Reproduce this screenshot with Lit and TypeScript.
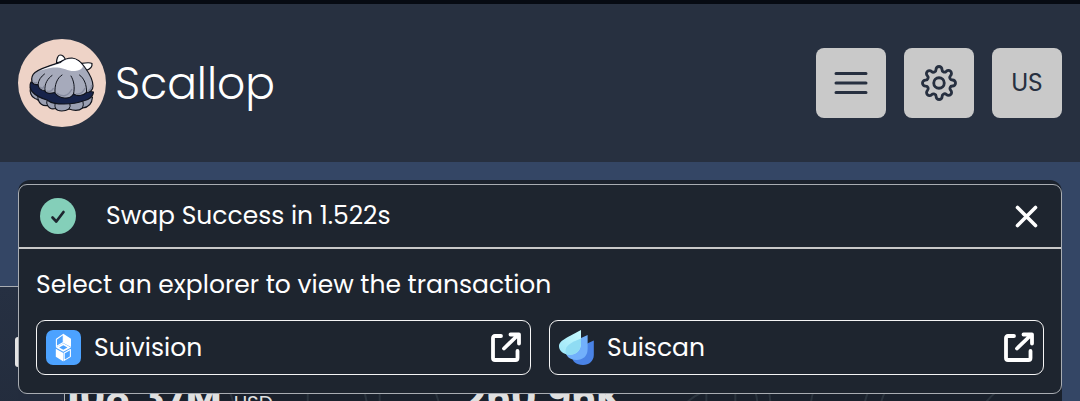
import { LitElement, html, css, svg } from "lit";
import { customElement, property, state } from "lit/decorators.js";

const suivisionLogo = svg`
  <svg class="brand" viewBox="0 0 35 35" aria-hidden="true">
    <rect width="35" height="35" rx="7" fill="#4ca2ff" />
    <path d="M10.4 9.2 17.3 4.4V12.4L10.4 16.4Z" fill="none" stroke="#fff" stroke-width="1.1" stroke-linejoin="round" />
    <path d="M17.3 3.8 25 8.8V17L17.3 13Z" fill="#fff" />
    <path d="M17.3 13.2 25 17.5 17.3 21.8 9.8 17.5Z" fill="#fff" />
    <path d="M17.3 15.2 21.4 17.5 17.3 19.8 13.2 17.5Z" fill="#4ca2ff" />
    <path d="M9.8 18.8 17.4 23V31.4L9.8 26.8Z" fill="#fff" />
    <path d="M18.2 23 24.4 19.6V26.6L18.2 30.4Z" fill="none" stroke="#fff" stroke-width="1.1" stroke-linejoin="round" />
  </svg>`;

const suiscanLogo = svg`
  <svg class="brand" viewBox="0 0 35 35" aria-hidden="true">
    <defs>
      <linearGradient id="ice" x1="0" y1="1" x2="1" y2="0">
        <stop offset="0" stop-color="#9be6f8" /><stop offset="1" stop-color="#c8faff" />
      </linearGradient>
    </defs>
    <path d="M34.8 10.5V25C34.8 31 30 35 24 35 17 35 13 31 13 26.500 13 21 19 18 34.8 10.500Z" fill="#4a83e6" />
    <path d="M28.600 5V19C28.600 26 24 30 17.500 30 11 30 6.500 26 6.500 21 6.500 15 13 12 28.600 5Z" fill="#72b0fb" />
    <path d="M22 0V13C22 20.500 17 24.800 11 24.800 4.500 24.800 0 20.500 0 16.500 0 11 6 8.500 22 0Z" fill="url(#ice)" />
    <path d="M22 8.500V13C22 20.500 17 24.800 11 24.800 9.600 24.800 8.300 24.600 7.200 24.200 6.700 23.200 6.500 22.100 6.500 21 6.500 15.500 12 12.400 22 8.500Z" fill="#8fdcf3" />
  </svg>`;

@customElement("scallop-mark")
export class ScallopMark extends LitElement {
  static styles = css`
    :host { display: block; width: 88px; height: 88px; }
    svg { display: block; width: 100%; height: 100%; }
  `;

  render() {
    return html`
      <svg viewBox="0 0 88 88" role="img" aria-label="Scallop logo">
        <circle cx="44" cy="44" r="44" fill="#eed3c7" />
        <g stroke="#10131c" stroke-width="1.2" stroke-linejoin="round" stroke-linecap="round">
          <path d="M38.500 24C38.500 20 40 16 42 16 44.500 16 46.500 18 47.500 21Z" fill="#fff" />
          <path d="M62 24.500C66 24 72 23 74 24.500 74.500 28 71 30.500 68 31.500Z" fill="#fff" />
          <path d="M12.500 48C11.500 53 13 58 17 59.500 19 60 20 61 20.500 61.500 22 65.500 25 67 29.500 66.500 31 69 34 70.500 37.500 69.500 40 73 47 72.500 51 70 55 71.500 61 72 64.500 69 70 68.500 74 65 74.500 58Z" fill="#9a9fb2" />
          <path d="M13 43C11 46 12 51 15 53.500 19 58 24 59.500 29 61 34 65 40 65 46 65 54 65 60 64 65 62 70 61 75 59 75.500 53Z" fill="#17234a" />
          <path d="M20 57Q19.500 59 20.500 61.500M29 61.500Q28 64 29.500 66.500M37 65Q36.500 67 37.500 69.500M52 65Q53 67 51 70M65 62.500Q66 66 64.500 69" fill="none" stroke-width="1" />
          <path d="M14 43C13 39 14 36 17 33.500 23 29 34 26 42 23.500 46 20 50 19 54 19 59 19.500 64 24 67 28.500 71 34 75 42 75 47 75 51 72 53.500 68.500 53.500 65 57 59 57.500 55.500 55 53.500 58 50 59.500 46.500 59 41 58.500 38 55.500 36.500 53.500 32 55 28 54 26.500 51.500 23 51.500 20.500 49 20 45.500 17 46 15 45 14 43Z" fill="#a6aabb" />
        </g>
        <path d="M20 32.500C27 29 35 26.500 42.500 24.200 46 21 50 19.700 54 19.700 59 20 63 24 65 27.500 63 31.500 58 32.500 53.500 32 47 30.500 43 28 35 28.500 29 29 24 31 20 32.500Z" fill="#fff" />
        <path d="M20 45.500C20.500 41 23 37.500 26.500 35M27 51.500C26 45 30 39 34 36.500M37 53.500C36.500 46 39 39 44 36M55.500 55C57 48 56 42 53 37M68.500 53.500C69 46 66 39 61.500 36" fill="none" stroke="#10131c" stroke-width="1" stroke-linecap="round" />
        <path d="M15.500 43Q18 45 19 43M22 48Q25 51 26 47M28.500 52Q33 54 35.500 49M38.500 54Q48 61 54 50M58 55Q64 56 67 49M70 52Q74 50 73.500 46" fill="none" stroke="#868b9f" stroke-width="1.400" />
      </svg>
    `;
  }
}

@customElement("explorer-notice")
export class ExplorerNotice extends LitElement {
  @property() message = "";

  static styles = css`
    :host {
      display: block;
      box-sizing: border-box;
      border: 1px solid #a9adb3;
      border-radius: 9px;
      background: #1e252f;
      color: #fff;
      font-size: 25px;
      line-height: 36px;
    }
    .head {
      display: flex;
      align-items: center;
      height: 62px;
      padding: 0 21px;
      border-bottom: 2px solid #c9c9c9;
    }
    .tick { width: 36px; height: 36px; margin-right: 30px; }
    .message { flex: 1; }
    button {
      display: flex;
      padding: 0;
      border: 0;
      background: none;
      color: inherit;
      cursor: pointer;
    }
    .cross { width: 27px; height: 27px; }
    .body { padding: 18px 17px; }
    .prompt { margin: 0 0 17px; }
    .links {
      display: grid;
      grid-template-columns: 1fr 1fr;
      gap: 18px;
    }
    .link {
      display: flex;
      align-items: center;
      gap: 13px;
      box-sizing: border-box;
      height: 55px;
      padding: 0 9px;
      border: 1px solid #f5f5f5;
      border-radius: 9px;
      color: inherit;
      text-decoration: none;
    }
    .name { flex: 1; }
    .brand { width: 35px; height: 35px; }
    .out { width: 31px; height: 31px; }
  `;

  private close() {
    this.dispatchEvent(new CustomEvent("dismiss"));
  }

  private link(name: string, logo: unknown) {
    return html`
      <a class="link" href="#${name.toLowerCase()}">
        ${logo}
        <span class="name">${name}</span>
        <svg class="out" viewBox="0 0 31 31" fill="none" stroke="#fff" stroke-width="3.800" stroke-linejoin="round" stroke-linecap="round" aria-hidden="true">
          <path d="M11 4H5Q3 4 3 6V26Q3 28 5 28H25.500Q27.500 28 27.500 26V19" />
          <path d="M14 16.500 28 3M20.500 2.500H29V11.500" />
        </svg>
      </a>
    `;
  }

  render() {
    return html`
      <div class="head">
        <svg class="tick" viewBox="0 0 36 36" aria-hidden="true">
          <circle cx="18" cy="18" r="18" fill="#84cfb9" />
          <path d="M12.500 19.500 16.300 23.500 23.500 14" fill="none" stroke="#1e252f" stroke-width="2.700" stroke-linecap="round" stroke-linejoin="round" />
        </svg>
        <span class="message">${this.message}</span>
        <button aria-label="Close" @click=${this.close}>
          <svg class="cross" viewBox="0 0 27 27" fill="none" stroke="#fff" stroke-width="3.600" stroke-linecap="round">
            <path d="M4.500 4.500 22.500 22.500M22.500 4.500 4.500 22.500" />
          </svg>
        </button>
      </div>
      <div class="body">
        <p class="prompt">Select an explorer to view the transaction</p>
        <div class="links">
          ${this.link("Suivision", suivisionLogo)} ${this.link("Suiscan", suiscanLogo)}
        </div>
      </div>
    `;
  }
}

@customElement("app-root")
export class AppRoot extends LitElement {
  @state() private noticeOpen = true;

  static styles = css`
    :host {
      display: flex;
      flex-direction: column;
      box-sizing: border-box;
      height: 100vh;
      overflow: hidden;
      border-top: 4px solid #060a12;
      background: #344665;
      color: #fff;
      font-family: Poppins, Inter, sans-serif;
    }
    header {
      display: flex;
      flex: none;
      align-items: center;
      box-sizing: border-box;
      height: 158px;
      padding: 0 18px;
      background: #273040;
    }
    .home {
      display: flex;
      align-items: center;
      gap: 9px;
      margin-right: auto;
      color: inherit;
      font-size: 44px;
      font-weight: 300;
      text-decoration: none;
    }
    .tools { display: flex; gap: 18px; }
    .tools button {
      display: flex;
      align-items: center;
      justify-content: center;
      width: 70px;
      height: 70px;
      padding: 0;
      border: 0;
      border-radius: 8px;
      background: #c9c9c9;
      color: #273040;
      font: inherit;
      font-size: 25px;
      cursor: pointer;
    }
    .tools svg {
      width: 36px;
      height: 36px;
      fill: none;
      stroke: currentColor;
      stroke-linecap: round;
      stroke-linejoin: round;
    }
    main {
      position: relative;
      display: grid;
      grid-template-columns: 18px 1fr 18px;
      flex: 1;
      min-height: 0;
    }
    .rail {
      margin-top: 124px;
      border-top: 1px solid #a9adb3;
      background: linear-gradient(#263042, #222b3b);
    }
    .chip {
      height: 30px;
      margin: 50px 0 0 15px;
      border-radius: 6px 0 0 6px;
      background: #e4e4e4;
    }
    .card {
      margin-top: 18px;
      padding: 197px 0 0 46px;
      border-radius: 12px 12px 0 0;
      background: linear-gradient(#1b222d 0 197px, #232c3d 197px);
    }
    .stats {
      position: relative;
      display: grid;
      grid-template-columns: 40% 1fr;
      height: 80px;
      border-left: 1px solid #a9adb3;
      background: #1a212c;
      color: #e0e0e0;
    }
    .waves {
      position: absolute;
      inset: 0;
      width: 100%;
      height: 100%;
      stroke: #2b343e;
      stroke-width: 2;
      fill: none;
    }
    .stat {
      position: relative;
      display: flex;
      align-items: baseline;
      gap: 12px;
      font-size: 20px;
      line-height: 40px;
    }
    .stat b { font-size: 39px; }
    explorer-notice {
      position: absolute;
      top: 22px;
      left: 18px;
      right: 18px;
    }
  `;

  render() {
    return html`
      <header>
        <a class="home" href="#home"><scallop-mark></scallop-mark><span>Scallop</span></a>
        <div class="tools">
          <button aria-label="Menu">
            <svg viewBox="0 0 36 36" stroke-width="3"><path d="M3 8.500H33M3 18H33M3 27.500H33" /></svg>
          </button>
          <button aria-label="Settings">
            <svg viewBox="0 0 24 24" stroke-width="1.900">
              <circle cx="12" cy="12" r="3.500" />
              <path d="M19.4 15a1.65 1.65 0 0 0 .33 1.82l.06.06a2 2 0 0 1 0 2.83 2 2 0 0 1-2.83 0l-.06-.06a1.65 1.65 0 0 0-1.82-.33 1.65 1.65 0 0 0-1 1.51V21a2 2 0 0 1-2 2 2 2 0 0 1-2-2v-.09A1.65 1.65 0 0 0 9 19.4a1.65 1.65 0 0 0-1.82.33l-.06.06a2 2 0 0 1-2.83 0 2 2 0 0 1 0-2.83l.06-.06a1.65 1.65 0 0 0 .33-1.82 1.65 1.65 0 0 0-1.51-1H3a2 2 0 0 1-2-2 2 2 0 0 1 2-2h.09A1.65 1.65 0 0 0 4.6 9a1.65 1.65 0 0 0-.33-1.82l-.06-.06a2 2 0 0 1 0-2.83 2 2 0 0 1 2.83 0l.06.06a1.65 1.65 0 0 0 1.82.33H9a1.65 1.65 0 0 0 1-1.51V3a2 2 0 0 1 2-2 2 2 0 0 1 2 2v.09a1.65 1.65 0 0 0 1 1.51 1.65 1.65 0 0 0 1.82-.33l.06-.06a2 2 0 0 1 2.83 0 2 2 0 0 1 0 2.83l-.06.06a1.65 1.65 0 0 0-.33 1.82V9a1.65 1.65 0 0 0 1.51 1H21a2 2 0 0 1 2 2 2 2 0 0 1-2 2h-.09a1.65 1.65 0 0 0-1.51 1z" />
            </svg>
          </button>
          <button aria-label="Region">US</button>
        </div>
      </header>
      <main>
        <div class="rail"><div class="chip"></div></div>
        <section class="card">
          <div class="stats">
            <svg class="waves" viewBox="0 0 998 80" preserveAspectRatio="none" aria-hidden="true">
              <path d="M165 15Q170 27 172 47M243 15V47M300 15Q302 27 308 47M315 15V47M371 15Q374 27 384 47M638 15Q622 23 612 37M642 15V47M671 15V47M691 15Q694 23 694 47M705 15Q706 23 708 47M749 15Q746 23 745 47M804 15Q800 23 797 47M821 15Q816 23 813 47M932 15Q922 23 914 37" />
            </svg>
            <div class="stat"><b>108.37M</b><span>USD</span></div>
            <div class="stat"><b>260.96K</b></div>
          </div>
        </section>
        ${this.noticeOpen
          ? html`<explorer-notice message="Swap Success in 1.522s" @dismiss=${() => (this.noticeOpen = false)}></explorer-notice>`
          : null}
      </main>
    `;
  }
}
